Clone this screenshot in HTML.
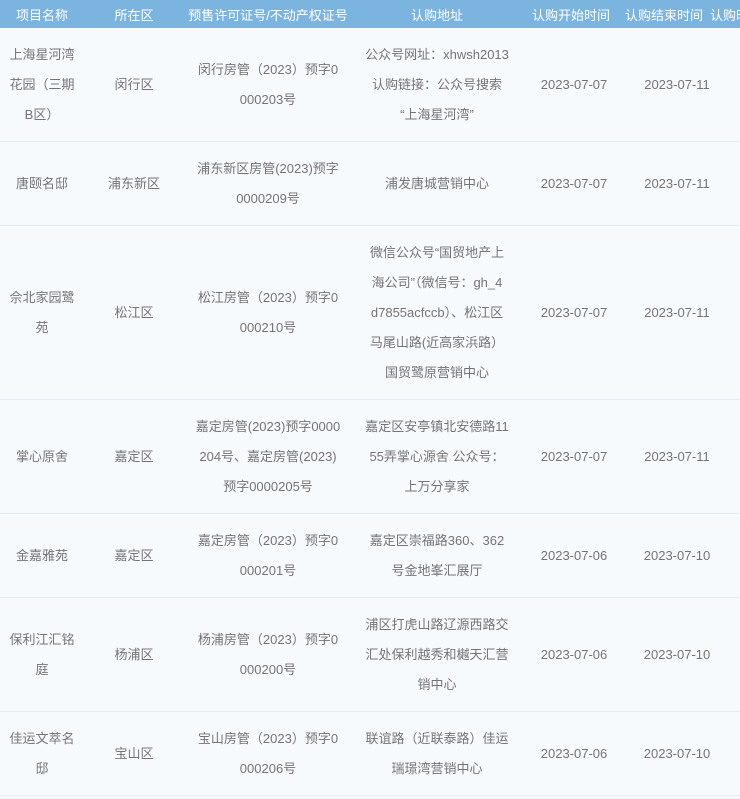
<!DOCTYPE html>
<html><head><meta charset="utf-8"><style>
html,body{margin:0;padding:0;background:#f7fafd;width:740px;height:799px;overflow:hidden}
table{border-collapse:collapse;table-layout:fixed;width:780px;font-family:"Liberation Sans","Noto Sans CJK SC",sans-serif;font-size:13px;color:#747474}
th{background:#7cb4e0;color:#fff;font-weight:normal;height:28px;padding:0;white-space:nowrap;text-align:center;font-size:13px}
td{text-align:center;line-height:30px;padding:12px 0 11px;border-bottom:1px solid #e2edf7;white-space:nowrap;vertical-align:middle}
</style></head><body>
<table>
<colgroup><col style="width:84px"><col style="width:100px"><col style="width:168px"><col style="width:170px"><col style="width:104px"><col style="width:102px"><col style="width:52px"></colgroup>
<tr><th>项目名称</th><th>所在区</th><th>预售许可证号/不动产权证号</th><th>认购地址</th><th style="padding-right:6px">认购开始时间</th><th style="text-align:left"><span style="margin-left:-1px">认购结束时间</span></th><th style="text-align:left"><span style="margin-left:-18px">认购时间</span></th></tr>
<tr><td>上海星河湾<br>花园（三期<br>B区）</td><td>闵行区</td><td>闵行房管（2023）预字0<br>000203号</td><td>公众号网址：xhwsh2013<br>认购链接：公众号搜索<br>“上海星河湾”</td><td>2023-07-07</td><td>2023-07-11</td><td></td></tr>
<tr><td>唐颐名邸</td><td>浦东新区</td><td>浦东新区房管(2023)预字<br>0000209号</td><td>浦发唐城营销中心</td><td>2023-07-07</td><td>2023-07-11</td><td></td></tr>
<tr><td>佘北家园鹭<br>苑</td><td>松江区</td><td>松江房管（2023）预字0<br>000210号</td><td>微信公众号“国贸地产上<br>海公司”（微信号：gh_4<br>d7855acfccb）、松江区<br>马尾山路(近高家浜路）<br>国贸鹭原营销中心</td><td>2023-07-07</td><td>2023-07-11</td><td></td></tr>
<tr><td>掌心原舍</td><td>嘉定区</td><td>嘉定房管(2023)预字0000<br>204号、嘉定房管(2023)<br>预字0000205号</td><td>嘉定区安亭镇北安德路11<br>55弄掌心源舍 公众号：<br>上万分享家</td><td>2023-07-07</td><td>2023-07-11</td><td></td></tr>
<tr><td>金嘉雅苑</td><td>嘉定区</td><td>嘉定房管（2023）预字0<br>000201号</td><td>嘉定区崇福路360、362<br>号金地峯汇展厅</td><td>2023-07-06</td><td>2023-07-10</td><td></td></tr>
<tr><td>保利江汇铭<br>庭</td><td>杨浦区</td><td>杨浦房管（2023）预字0<br>000200号</td><td>浦区打虎山路辽源西路交<br>汇处保利越秀和樾天汇营<br>销中心</td><td>2023-07-06</td><td>2023-07-10</td><td></td></tr>
<tr><td>佳运文萃名<br>邸</td><td>宝山区</td><td>宝山房管（2023）预字0<br>000206号</td><td>联谊路（近联泰路）佳运<br>瑞璟湾营销中心</td><td>2023-07-06</td><td>2023-07-10</td><td></td></tr>
</table>
</body></html>
